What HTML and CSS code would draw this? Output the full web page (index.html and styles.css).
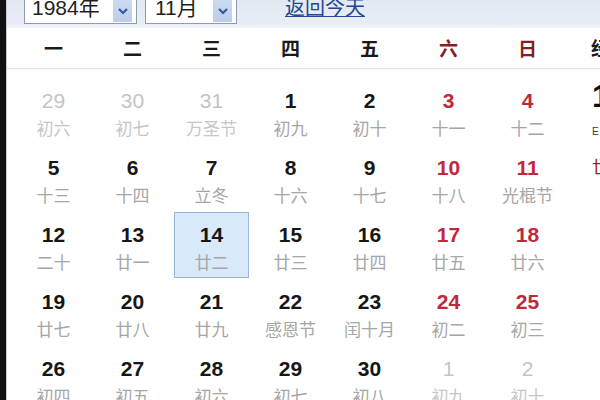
FILE: index.html
```html
<!DOCTYPE html>
<html lang="zh-CN">
<head>
<meta charset="utf-8">
<title>万年历</title>
<link rel="stylesheet" href="styles.css">
</head>
<body>
<div class="frame">
  <div class="edge"></div>
  <div class="main">
    <div class="topbar">
      <div class="select sel-year">
        <span class="sel-text">1984年</span>
        <span class="sel-btn"><svg width="12" height="8" viewBox="0 0 12 8"><path d="M2 2 L6 6 L10 2" fill="none" stroke="#3657a4" stroke-width="2.2"/></svg></span>
      </div>
      <div class="select sel-month">
        <span class="sel-text">11月</span>
        <span class="sel-btn"><svg width="12" height="8" viewBox="0 0 12 8"><path d="M2 2 L6 6 L10 2" fill="none" stroke="#3657a4" stroke-width="2.2"/></svg></span>
      </div>
      <a class="today" href="#">返回今天</a>
    </div>
    <div class="head">
      <div class="wd">一</div>
      <div class="wd">二</div>
      <div class="wd">三</div>
      <div class="wd">四</div>
      <div class="wd">五</div>
      <div class="wd we">六</div>
      <div class="wd we">日</div>
      <div class="wd side-h">经</div>
    </div>
    <div class="body">
      <div class="grid">
        <div class="cell other"><div class="n">29</div><div class="l">初六</div></div>
        <div class="cell other"><div class="n">30</div><div class="l">初七</div></div>
        <div class="cell other"><div class="n">31</div><div class="l">万圣节</div></div>
        <div class="cell"><div class="n">1</div><div class="l">初九</div></div>
        <div class="cell"><div class="n">2</div><div class="l">初十</div></div>
        <div class="cell red"><div class="n">3</div><div class="l">十一</div></div>
        <div class="cell red"><div class="n">4</div><div class="l">十二</div></div>

        <div class="cell"><div class="n">5</div><div class="l">十三</div></div>
        <div class="cell"><div class="n">6</div><div class="l">十四</div></div>
        <div class="cell"><div class="n">7</div><div class="l">立冬</div></div>
        <div class="cell"><div class="n">8</div><div class="l">十六</div></div>
        <div class="cell"><div class="n">9</div><div class="l">十七</div></div>
        <div class="cell red"><div class="n">10</div><div class="l">十八</div></div>
        <div class="cell red"><div class="n">11</div><div class="l">光棍节</div></div>

        <div class="cell"><div class="n">12</div><div class="l">二十</div></div>
        <div class="cell"><div class="n">13</div><div class="l">廿一</div></div>
        <div class="cell sel"><div class="n">14</div><div class="l">廿二</div></div>
        <div class="cell"><div class="n">15</div><div class="l">廿三</div></div>
        <div class="cell"><div class="n">16</div><div class="l">廿四</div></div>
        <div class="cell red"><div class="n">17</div><div class="l">廿五</div></div>
        <div class="cell red"><div class="n">18</div><div class="l">廿六</div></div>

        <div class="cell"><div class="n">19</div><div class="l">廿七</div></div>
        <div class="cell"><div class="n">20</div><div class="l">廿八</div></div>
        <div class="cell"><div class="n">21</div><div class="l">廿九</div></div>
        <div class="cell"><div class="n">22</div><div class="l">感恩节</div></div>
        <div class="cell"><div class="n">23</div><div class="l">闰十月</div></div>
        <div class="cell red"><div class="n">24</div><div class="l">初二</div></div>
        <div class="cell red"><div class="n">25</div><div class="l">初三</div></div>

        <div class="cell"><div class="n">26</div><div class="l">初四</div></div>
        <div class="cell"><div class="n">27</div><div class="l">初五</div></div>
        <div class="cell"><div class="n">28</div><div class="l">初六</div></div>
        <div class="cell"><div class="n">29</div><div class="l">初七</div></div>
        <div class="cell"><div class="n">30</div><div class="l">初八</div></div>
        <div class="cell other"><div class="n">1</div><div class="l">初九</div></div>
        <div class="cell other"><div class="n">2</div><div class="l">初十</div></div>
      </div>
      <div class="side">
        <div class="side-big">1</div>
        <div class="side-small">E</div>
        <div class="side-red">世</div>
      </div>
    </div>
  </div>
</div>
</body>
</html>
```

FILE: styles.css
```css
html, body {
  margin: 0;
  padding: 0;
  background: #ffffff;
}
body {
  width: 600px;
  height: 400px;
  overflow: hidden;
  font-family: "Liberation Sans", "Noto Sans CJK SC", sans-serif;
}
.frame {
  display: flex;
  height: 400px;
}
.edge {
  width: 6px;
  background: #111111;
  border-right: 1px solid #c8ccd2;
  flex: none;
}
.main {
  flex: 1;
  min-width: 0;
  display: flex;
  flex-direction: column;
}
.topbar {
  height: 28px;
  background: linear-gradient(#e3e9f3, #e8edf5 85%, #f1f4f9);
  display: flex;
  align-items: flex-start;
  padding-left: 17px;
  flex: none;
}
.select {
  height: 29px;
  margin-top: -5px;
  border: 1px solid #8d9bb2;
  background: #ffffff;
  display: flex;
  align-items: stretch;
  box-sizing: border-box;
}
.sel-year {
  width: 113px;
}
.sel-month {
  width: 92px;
  margin-left: 8px;
}
.sel-text {
  flex: 1;
  font-size: 21px;
  line-height: 24px;
  color: #1e1e1e;
  padding-left: 7px;
}
.sel-month .sel-text {
  padding-left: 9px;
}
.sel-btn {
  width: 19px;
  margin: 0 4px 1px 0;
  background: linear-gradient(#cfdcf1, #bccde9);
  display: flex;
  align-items: center;
  justify-content: center;
  padding-top: 4px;
}
.today {
  margin-left: 48px;
  margin-top: -4px;
  font-family: "Noto Sans CJK SC", sans-serif;
  font-size: 20px;
  line-height: 22px;
  color: #24478f;
  text-decoration: underline;
  text-decoration-thickness: 1px;
  text-underline-offset: 1px;
}
.head {
  height: 40px;
  display: grid;
  grid-template-columns: repeat(7, 75px) 1fr;
  column-gap: 4px;
  padding-left: 9px;
  border-bottom: 1px solid #e2e4e8;
  box-shadow: 0 1px 2px rgba(0,0,0,0.04);
  flex: none;
}
.wd {
  font-family: "Noto Sans CJK SC", sans-serif;
  font-weight: 700;
  font-size: 19px;
  line-height: 40px;
  text-align: center;
  color: #1a1a1a;
}
.wd.we {
  color: #8a1c24;
}
.wd.side-h {
  text-align: left;
  padding-left: 22px;
}
.body {
  display: flex;
  padding-left: 9px;
  padding-top: 9px;
}
.grid {
  display: grid;
  grid-template-columns: repeat(7, 75px);
  grid-auto-rows: 66px;
  column-gap: 4px;
  row-gap: 1px;
  flex: none;
}
.cell {
  box-sizing: border-box;
  padding-top: 10px;
  text-align: center;
  border: 1px solid transparent;
}
.n {
  font-weight: 700;
  font-size: 21px;
  line-height: 24px;
  color: #161616;
}
.l {
  margin-top: 3px;
  font-family: "Noto Sans CJK SC", sans-serif;
  font-size: 17px;
  line-height: 24px;
  color: #a6a6a6;
}
.cell.red .n {
  color: #c1283c;
}
.cell.other .n {
  color: #c4c4c4;
  font-weight: 400;
}
.cell.other .l {
  color: #c6c6c6;
}
.cell.sel {
  background: #d8e9fa;
  border-color: #98b6d6;
}
.side {
  margin-left: 27px;
  display: flex;
  flex-direction: column;
}
.side-big {
  font-weight: 700;
  font-size: 32px;
  line-height: 36px;
  color: #111111;
}
.side-small {
  font-size: 10px;
  line-height: 12px;
  margin-top: 12px;
  color: #333333;
}
.side-red {
  font-family: "Noto Sans CJK SC", sans-serif;
  font-size: 18px;
  line-height: 24px;
  margin-top: 16px;
  color: #a31a22;
}
```
